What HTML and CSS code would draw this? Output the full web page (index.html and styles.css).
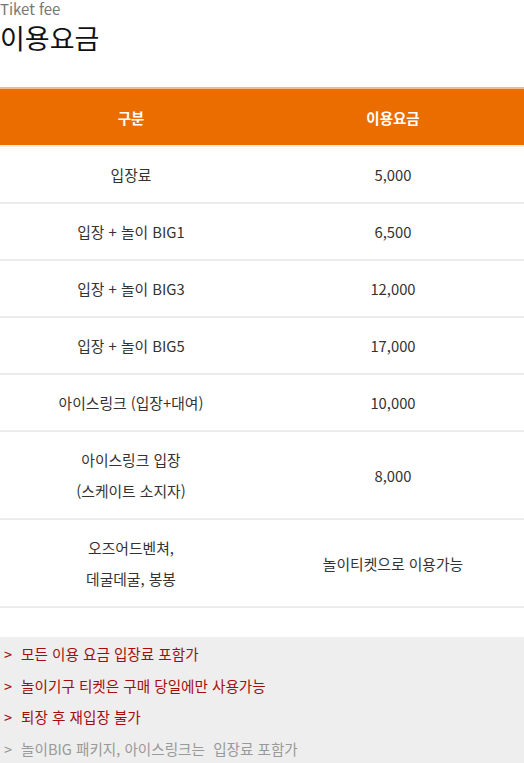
FILE: index.html
```html
<!DOCTYPE html>
<html lang="ko">
<head>
<meta charset="utf-8">
<link rel="stylesheet" href="styles.css">
</head>
<body>
<div class="title">
  <p class="sub">Tiket fee</p>
  <h1 class="main">이용요금</h1>
</div>
<table class="fee">
  <thead>
    <tr><th>구분</th><th>이용요금</th></tr>
  </thead>
  <tbody>
    <tr><td>입장료</td><td>5,000</td></tr>
    <tr><td>입장 + 놀이 BIG1</td><td>6,500</td></tr>
    <tr><td>입장 + 놀이 BIG3</td><td>12,000</td></tr>
    <tr><td>입장 + 놀이 BIG5</td><td>17,000</td></tr>
    <tr><td>아이스링크 (입장+대여)</td><td>10,000</td></tr>
    <tr><td>아이스링크 입장<br>(스케이트 소지자)</td><td>8,000</td></tr>
    <tr><td>오즈어드벤쳐,<br>데굴데굴, 봉봉</td><td>놀이티켓으로 이용가능</td></tr>
  </tbody>
</table>
<ul class="notice">
  <li class="red">모든 이용 요금 입장료 포함가</li>
  <li class="red">놀이기구 티켓은 구매 당일에만 사용가능</li>
  <li class="red">퇴장 후 재입장 불가</li>
  <li class="gray">놀이BIG 패키지, 아이스링크는&nbsp; 입장료 포함가</li>
</ul>
</body>
</html>
```
FILE: styles.css
```css
* { box-sizing: border-box; }
html, body { margin: 0; padding: 0; background: #fff; }
body {
  font-family: "Noto Sans CJK KR", "Noto Sans", sans-serif;
  color: #333;
}
.sub {
  margin: 0;
  font-size: 15px;
  line-height: 18px;
  color: #777;
}
.main {
  margin: 0;
  font-size: 27px;
  font-weight: 400;
  line-height: 40px;
  color: #111;
}
.fee {
  width: 100%;
  border-collapse: collapse;
  margin-top: 29px;
  table-layout: fixed;
}
.fee th {
  background: #eb6d00;
  color: #fff;
  font-size: 14.5px;
  font-weight: 700;
  height: 58px;
  padding: 0;
  border-top: 2px solid #f6b989;
  border-bottom: 2px solid #ebebeb;
}
.fee td {
  text-align: center;
  font-size: 14.8px;
  line-height: 31px;
  padding: 12px 0;
  border-bottom: 2px solid #ebebeb;
  color: #333;
}
.notice {
  list-style: none;
  margin: 29px 0 0;
  padding: 1px 0 3px 4px;
  background: #eeeeee;
  font-size: 14.6px;
  line-height: 31.5px;
}
.notice li::before { content: ">"; margin-right: 9px; }
.notice .red { color: #a30d0d; }
.notice .gray { color: #999; }
```
